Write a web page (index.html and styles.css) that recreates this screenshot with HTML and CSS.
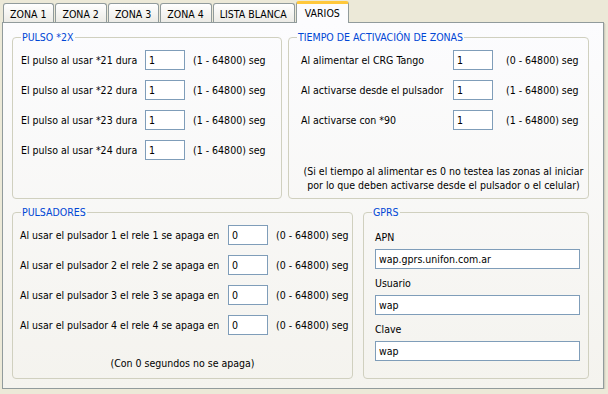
FILE: index.html
```html
<!DOCTYPE html>
<html lang="es">
<head>
    <meta charset="UTF-8">
    <title>Configuración - Varios</title>
    <link rel="stylesheet" href="styles.css">
</head>
<body>
    <div class="window">
        <ul class="tabs">
            <li class="tab">ZONA 1</li>
            <li class="tab">ZONA 2</li>
            <li class="tab">ZONA 3</li>
            <li class="tab">ZONA 4</li>
            <li class="tab">LISTA BLANCA</li>
            <li class="tab active">VARIOS</li>
        </ul>

        <div class="panel">
            <div class="row">
                <fieldset class="group group-pulso">
                    <legend>PULSO *2X</legend>
                    <div class="fields">
                        <label>El pulso al usar *21 dura</label><input type="text" value="1"><span class="range">(1 - 64800) seg</span>
                        <label>El pulso al usar *22 dura</label><input type="text" value="1"><span class="range">(1 - 64800) seg</span>
                        <label>El pulso al usar *23 dura</label><input type="text" value="1"><span class="range">(1 - 64800) seg</span>
                        <label>El pulso al usar *24 dura</label><input type="text" value="1"><span class="range">(1 - 64800) seg</span>
                    </div>
                </fieldset>

                <fieldset class="group group-tiempo">
                    <legend>TIEMPO DE ACTIVACIÓN DE ZONAS</legend>
                    <div class="fields">
                        <label>Al alimentar el CRG Tango</label><input type="text" value="1"><span class="range">(0 - 64800) seg</span>
                        <label>Al activarse desde el pulsador</label><input type="text" value="1"><span class="range">(1 - 64800) seg</span>
                        <label>Al activarse con *90</label><input type="text" value="1"><span class="range">(1 - 64800) seg</span>
                    </div>
                    <p class="note note-tiempo">(Si el tiempo al alimentar es 0 no testea las zonas al iniciar<br>por lo que deben activarse desde el pulsador o el celular)</p>
                </fieldset>
            </div>

            <div class="row row-bottom">
                <fieldset class="group group-pulsadores">
                    <legend>PULSADORES</legend>
                    <div class="fields">
                        <label>Al usar el pulsador 1 el rele 1 se apaga en</label><input type="text" value="0"><span class="range">(0 - 64800) seg</span>
                        <label>Al usar el pulsador 2 el rele 2 se apaga en</label><input type="text" value="0"><span class="range">(0 - 64800) seg</span>
                        <label>Al usar el pulsador 3 el rele 3 se apaga en</label><input type="text" value="0"><span class="range">(0 - 64800) seg</span>
                        <label>Al usar el pulsador 4 el rele 4 se apaga en</label><input type="text" value="0"><span class="range">(0 - 64800) seg</span>
                    </div>
                    <p class="note note-pulsadores">(Con 0 segundos no se apaga)</p>
                </fieldset>

                <fieldset class="group group-gprs">
                    <legend>GPRS</legend>
                    <div class="gprs-body">
                        <label class="stack-label">APN</label>
                        <input type="text" class="wide" value="wap.gprs.unifon.com.ar">
                        <label class="stack-label">Usuario</label>
                        <input type="text" class="wide" value="wap">
                        <label class="stack-label">Clave</label>
                        <input type="text" class="wide" value="wap">
                    </div>
                </fieldset>
            </div>
        </div>
    </div>
</body>
</html>
```

FILE: styles.css
```css
body {
    margin: 0;
    background-color: #ece9d8;
    font-family: 'DejaVu Sans Condensed', 'DejaVu Sans', sans-serif;
    font-stretch: condensed;
    font-size: 10.5px;
    color: #000;
}
.window {
    padding: 1px 0 0 2px;
    width: 602px;
}
.tabs {
    display: flex;
    list-style: none;
    margin: 0;
    padding: 0 0 0 1px;
    height: 21px;
    position: relative;
    z-index: 1;
}
.tab {
    box-sizing: border-box;
    height: 19px;
    margin-top: 2px;
    margin-right: 1px;
    padding: 3px 7px 0 6px;
    border: 1px solid #919b9c;
    border-bottom: none;
    border-radius: 3px 3px 0 0;
    background: linear-gradient(#ffffff, #ecebe6);
    line-height: 14px;
    white-space: nowrap;
}
.tab.active {
    height: 22px;
    margin-top: 0;
    padding: 2px 8px 0 8px;
    border-top: 3px solid #ffc83c;
    background: #fcfcfe;
}
.panel {
    box-sizing: border-box;
    height: 367px;
    padding: 8px 14px 0 9px;
    border: 1px solid #919b9c;
    background: linear-gradient(#fcfcfe, #f4f3ee);
    box-shadow: 1px 1px 0 #d0cebf, 2px 2px 0 #e3e0d0;
}
.row {
    display: flex;
    gap: 6px;
    height: 168px;
}
.row-bottom {
    margin-top: 7px;
    gap: 10px;
    height: 173px;
}
.group {
    box-sizing: border-box;
    min-width: 0;
    margin: 0;
    padding: 6px 0 0 0;
    border: 1px solid #d0d0bf;
    border-radius: 4px;
}
.group legend {
    padding: 0 1px;
    margin-left: 8px;
    color: #0046d5;
    line-height: 13px;
}
.group-pulso {
    width: 270px;
}
.group-tiempo {
    width: 301px;
}
.group-pulsadores {
    width: 341px;
}
.group-gprs {
    width: 226px;
}
.fields {
    display: grid;
    grid-template-columns: 124px 40px auto;
    grid-auto-rows: 20px;
    row-gap: 10px;
    align-items: center;
    padding-left: 8px;
    white-space: nowrap;
}
.group-tiempo .fields {
    grid-template-columns: 152px 40px auto;
    padding-left: 12px;
}
.group-pulsadores .fields {
    grid-template-columns: 208px 40px auto;
    padding-left: 7px;
}
.range {
    padding-left: 8px;
}
.group-tiempo .range {
    padding-left: 13px;
}
input {
    box-sizing: border-box;
    width: 40px;
    height: 20px;
    margin: 0;
    padding: 0 3px;
    border: 1px solid #7f9db9;
    background: #fff;
    font-family: inherit;
    font-stretch: condensed;
    font-size: 10.5px;
    color: #000;
    outline: none;
}
.note {
    margin: 0;
    line-height: 14px;
    text-align: center;
    white-space: nowrap;
}
.note-tiempo {
    margin-top: 34px;
    padding-left: 10px;
}
.note-pulsadores {
    margin-top: 21px;
}
.gprs-body {
    padding: 5px 0 0 11px;
}
.stack-label {
    display: block;
    line-height: 14px;
    margin-bottom: 5px;
}
input.wide {
    display: block;
    width: 205px;
    margin-bottom: 7px;
}
```
